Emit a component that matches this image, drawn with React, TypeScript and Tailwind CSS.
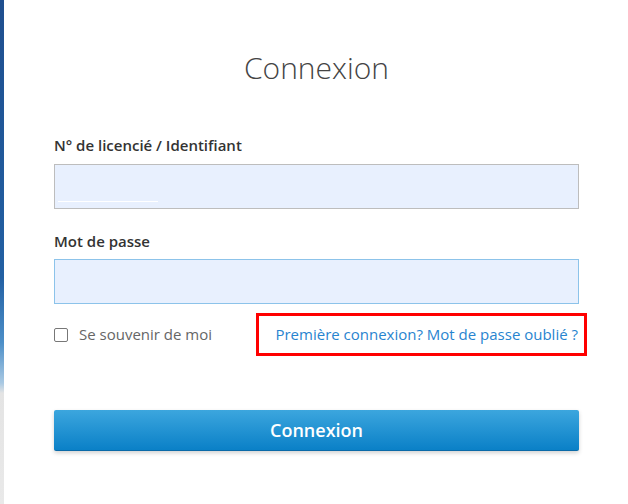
import { useState } from "react";

export default function App() {
  const [remember, setRemember] = useState(false);
  return (
    <div className="flex min-h-[504px] w-[628px] bg-white" style={{ fontFamily: '"Open Sans", "Liberation Sans", sans-serif' }}>
      {/* background peeking on the left */}
      <div className="w-[4px] shrink-0 bg-[linear-gradient(to_bottom,#1f4f8f_0%,#2260a3_55%,#4d8fc8_68%,#a9c9e3_76%,#e4e4e4_78%,#e9e9e9_100%)]" />

      <div className="flex-1 pl-[50px] pr-[49px] pt-[48px]">
        <h1 className="text-center text-[30px] leading-[40px] font-light text-[#444]">Connexion</h1>

        <form className="mt-[47px]" onSubmit={e => e.preventDefault()}>
          <label className="block text-[15px] leading-[20px] font-semibold text-[#333] mb-[9px]">N° de licencié / Identifiant</label>
          <div className="relative">
            <input type="text" className="block w-full h-[45px] bg-[#e8f0fe] border border-[#bdbdbd] px-3 outline-none" />
            <span className="absolute left-[4px] top-[37px] w-[100px] h-px bg-white" />
          </div>

          <label className="block mt-[22px] text-[15px] leading-[20px] font-semibold text-[#333] mb-[8px]">Mot de passe</label>
          <input type="password" className="block w-full h-[45px] bg-[#e8f0fe] border border-[#8cc3ea] px-3 outline-none" />

          <div className="mt-[9px] flex items-center justify-between">
            <label className="flex items-center gap-[11px] text-[15px] text-[#666] cursor-pointer">
              <span
                onClick={() => setRemember(!remember)}
                className="w-[14px] h-[14px] rounded-[2px] border border-[#777] bg-white"
              />
              Se souvenir de moi
            </label>
            <div className="-mr-[8px] h-[43px] border-[3px] border-[#ff0000] pl-[16px] pr-[6px] flex items-center">
              <a href="#" className="text-[15px] text-[#2884cf] whitespace-nowrap">Première connexion? Mot de passe oublié ?</a>
            </div>
          </div>

          <button
            type="submit"
            className="mt-[54px] w-full h-[41px] rounded-[2px] border-b border-[#0a6aa8] bg-[linear-gradient(to_bottom,#3ca6de,#0a80c7)] text-white text-[18px] font-semibold shadow-[0_2px_4px_rgba(0,0,0,0.18)]"
          >
            Connexion
          </button>
        </form>
      </div>
    </div>
  );
}
